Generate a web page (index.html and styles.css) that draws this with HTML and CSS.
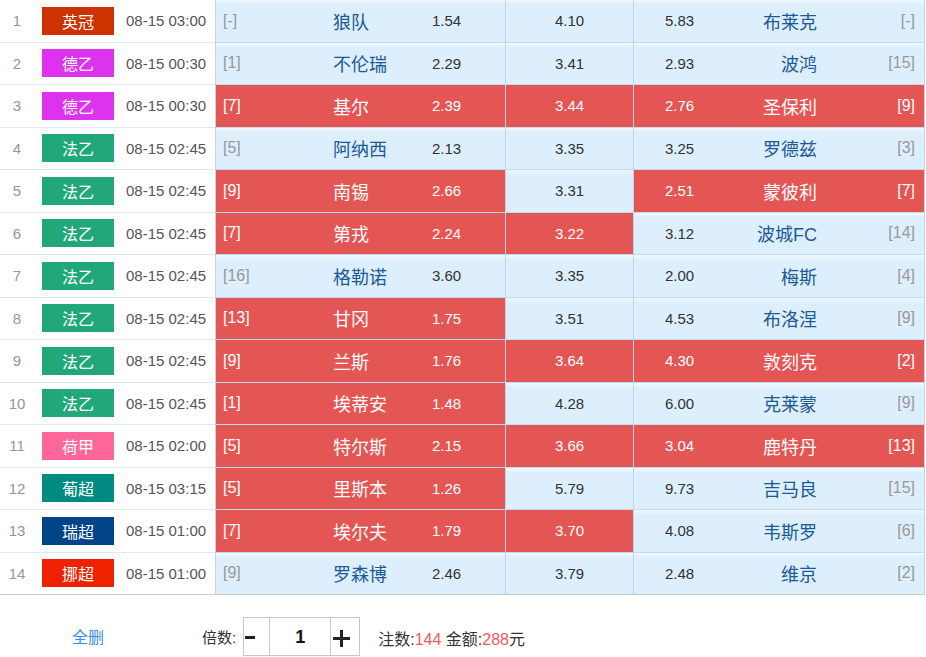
FILE: index.html
```html
<!DOCTYPE html>
<html lang="zh-CN">
<head>
<meta charset="utf-8">
<title>比赛列表</title>
<link rel="stylesheet" href="styles.css">
</head>
<body>
<div class="table">
  <div class="row">
    <div class="num">1</div><div class="league"><span class="badge b-yg">英冠</span></div><div class="time">08-15 03:00</div>
    <div class="home"><span class="rank">[-]</span><span class="team">狼队</span><span class="odds">1.54</span></div>
    <div class="draw">4.10</div>
    <div class="away"><span class="odds">5.83</span><span class="team">布莱克</span><span class="rank">[-]</span></div>
  </div>
  <div class="row">
    <div class="num">2</div><div class="league"><span class="badge b-dy">德乙</span></div><div class="time">08-15 00:30</div>
    <div class="home"><span class="rank">[1]</span><span class="team">不伦瑞</span><span class="odds">2.29</span></div>
    <div class="draw">3.41</div>
    <div class="away"><span class="odds">2.93</span><span class="team">波鸿</span><span class="rank">[15]</span></div>
  </div>
  <div class="row">
    <div class="num">3</div><div class="league"><span class="badge b-dy">德乙</span></div><div class="time">08-15 00:30</div>
    <div class="home hit"><span class="rank">[7]</span><span class="team">基尔</span><span class="odds">2.39</span></div>
    <div class="draw hit">3.44</div>
    <div class="away hit"><span class="odds">2.76</span><span class="team">圣保利</span><span class="rank">[9]</span></div>
  </div>
  <div class="row">
    <div class="num">4</div><div class="league"><span class="badge b-fy">法乙</span></div><div class="time">08-15 02:45</div>
    <div class="home"><span class="rank">[5]</span><span class="team">阿纳西</span><span class="odds">2.13</span></div>
    <div class="draw">3.35</div>
    <div class="away"><span class="odds">3.25</span><span class="team">罗德兹</span><span class="rank">[3]</span></div>
  </div>
  <div class="row">
    <div class="num">5</div><div class="league"><span class="badge b-fy">法乙</span></div><div class="time">08-15 02:45</div>
    <div class="home hit"><span class="rank">[9]</span><span class="team">南锡</span><span class="odds">2.66</span></div>
    <div class="draw">3.31</div>
    <div class="away hit"><span class="odds">2.51</span><span class="team">蒙彼利</span><span class="rank">[7]</span></div>
  </div>
  <div class="row">
    <div class="num">6</div><div class="league"><span class="badge b-fy">法乙</span></div><div class="time">08-15 02:45</div>
    <div class="home hit"><span class="rank">[7]</span><span class="team">第戎</span><span class="odds">2.24</span></div>
    <div class="draw hit">3.22</div>
    <div class="away"><span class="odds">3.12</span><span class="team">波城FC</span><span class="rank">[14]</span></div>
  </div>
  <div class="row">
    <div class="num">7</div><div class="league"><span class="badge b-fy">法乙</span></div><div class="time">08-15 02:45</div>
    <div class="home"><span class="rank">[16]</span><span class="team">格勒诺</span><span class="odds">3.60</span></div>
    <div class="draw">3.35</div>
    <div class="away"><span class="odds">2.00</span><span class="team">梅斯</span><span class="rank">[4]</span></div>
  </div>
  <div class="row">
    <div class="num">8</div><div class="league"><span class="badge b-fy">法乙</span></div><div class="time">08-15 02:45</div>
    <div class="home hit"><span class="rank">[13]</span><span class="team">甘冈</span><span class="odds">1.75</span></div>
    <div class="draw">3.51</div>
    <div class="away"><span class="odds">4.53</span><span class="team">布洛涅</span><span class="rank">[9]</span></div>
  </div>
  <div class="row">
    <div class="num">9</div><div class="league"><span class="badge b-fy">法乙</span></div><div class="time">08-15 02:45</div>
    <div class="home hit"><span class="rank">[9]</span><span class="team">兰斯</span><span class="odds">1.76</span></div>
    <div class="draw hit">3.64</div>
    <div class="away hit"><span class="odds">4.30</span><span class="team">敦刻克</span><span class="rank">[2]</span></div>
  </div>
  <div class="row">
    <div class="num">10</div><div class="league"><span class="badge b-fy">法乙</span></div><div class="time">08-15 02:45</div>
    <div class="home hit"><span class="rank">[1]</span><span class="team">埃蒂安</span><span class="odds">1.48</span></div>
    <div class="draw">4.28</div>
    <div class="away"><span class="odds">6.00</span><span class="team">克莱蒙</span><span class="rank">[9]</span></div>
  </div>
  <div class="row">
    <div class="num">11</div><div class="league"><span class="badge b-hj">荷甲</span></div><div class="time">08-15 02:00</div>
    <div class="home hit"><span class="rank">[5]</span><span class="team">特尔斯</span><span class="odds">2.15</span></div>
    <div class="draw hit">3.66</div>
    <div class="away hit"><span class="odds">3.04</span><span class="team">鹿特丹</span><span class="rank">[13]</span></div>
  </div>
  <div class="row">
    <div class="num">12</div><div class="league"><span class="badge b-pc">葡超</span></div><div class="time">08-15 03:15</div>
    <div class="home hit"><span class="rank">[5]</span><span class="team">里斯本</span><span class="odds">1.26</span></div>
    <div class="draw">5.79</div>
    <div class="away"><span class="odds">9.73</span><span class="team">吉马良</span><span class="rank">[15]</span></div>
  </div>
  <div class="row">
    <div class="num">13</div><div class="league"><span class="badge b-rc">瑞超</span></div><div class="time">08-15 01:00</div>
    <div class="home hit"><span class="rank">[7]</span><span class="team">埃尔夫</span><span class="odds">1.79</span></div>
    <div class="draw hit">3.70</div>
    <div class="away"><span class="odds">4.08</span><span class="team">韦斯罗</span><span class="rank">[6]</span></div>
  </div>
  <div class="row">
    <div class="num">14</div><div class="league"><span class="badge b-nc">挪超</span></div><div class="time">08-15 01:00</div>
    <div class="home"><span class="rank">[9]</span><span class="team">罗森博</span><span class="odds">2.46</span></div>
    <div class="draw">3.79</div>
    <div class="away"><span class="odds">2.48</span><span class="team">维京</span><span class="rank">[2]</span></div>
  </div>
</div>
<div class="footer">
  <a class="clear" href="#">全删</a>
  <span class="label">倍数:</span>
  <div class="stepper">
    <span class="step minus"><svg width="10" height="3" viewBox="0 0 10 3"><rect width="10" height="3" fill="#222"/></svg></span>
    <span class="value">1</span>
    <span class="step plus"><svg width="17" height="17" viewBox="0 0 17 17"><rect x="7" y="0" width="3" height="17" fill="#222"/><rect x="0" y="7" width="17" height="3" fill="#222"/></svg></span>
  </div>
  <span class="summary">注数:<em>144</em> 金额:<em>288</em>元</span>
</div>
</body>
</html>
```

FILE: styles.css
```css
html, body {
  margin: 0;
  padding: 0;
  background: #fff;
}
body {
  font-family: "Liberation Sans", "Noto Sans CJK SC", sans-serif;
  font-size: 15px;
  color: #333;
  width: 926px;
}
.table {
  width: 925px;
}
.row {
  display: grid;
  grid-template-columns: 34px 92px 89px 290px 128px 292px;
  height: 42.5px;
}
.row > div {
  box-sizing: border-box;
  display: flex;
  align-items: center;
  border-bottom: 1px solid #dfe9f5;
}
.num {
  justify-content: center;
  color: #9a948e;
  font-size: 15px;
}
.league {
  padding-left: 8px;
}
.badge {
  display: flex;
  align-items: center;
  justify-content: center;
  width: 72px;
  height: 28px;
  color: #fff;
  font-size: 16px;
}
.b-yg { background: #cc3300; }
.b-dy { background: #dd33ee; }
.b-fy { background: #21a779; }
.b-hj { background: #ff6699; }
.b-pc { background: #008a84; }
.b-rc { background: #004488; }
.b-nc { background: #ee2200; }
.time {
  color: #555;
  font-size: 15px;
  white-space: nowrap;
}
.row > .home,
.row > .draw,
.row > .away {
  background: linear-gradient(#f1f8fe, #ddeefc 5px);
  border-left: 1px solid #bcd5ef;
  border-bottom-color: #c4d9f0;
}
.row > .hit {
  background: #e45654;
  color: #fff;
}
.home {
  display: grid !important;
  grid-template-columns: 110px 99px 1fr;
  padding-left: 7px;
}
.away {
  display: grid !important;
  grid-template-columns: 55px 97px 98px;
  padding-left: 31px;
  padding-right: 9px;
  border-right: 1px solid #bcd5ef;
}
.draw {
  justify-content: center;
}
.rank {
  color: #999;
  font-size: 16px;
}
.team {
  color: #1b5a96;
  font-size: 18px;
}
.odds {
  color: #333;
}
.away .team,
.away .rank {
  text-align: right;
}
.hit .rank,
.hit .team,
.hit .odds {
  color: #fff;
}
.row:last-child > div {
  border-bottom-color: #c8c8c8;
}
.footer {
  display: flex;
  align-items: center;
  padding-top: 20px;
  padding-left: 72px;
  height: 42px;
}
.clear {
  width: 130px;
  color: #3a8ee6;
  text-decoration: none;
  font-size: 16px;
}
.label {
  color: #333;
}
.stepper {
  display: flex;
  box-sizing: border-box;
  margin-left: 7px;
  height: 39px;
  border: 1px solid #c8c8c8;
}
.step {
  display: flex;
  align-items: center;
}
.minus {
  width: 25px;
  padding-left: 1px;
  box-sizing: border-box;
  padding-top: 2px;
}
.plus {
  width: 28px;
  padding-left: 2px;
  box-sizing: border-box;
  padding-top: 4px;
}
.value {
  display: flex;
  align-items: center;
  justify-content: center;
  width: 62px;
  box-sizing: border-box;
  border-left: 1px solid #c8c8c8;
  border-right: 1px solid #c8c8c8;
  font-weight: bold;
  font-size: 18px;
  color: #111;
  padding-top: 3px;
}
.summary {
  margin-left: 18px;
  color: #333;
  font-size: 16px;
  padding-top: 3px;
}
.summary em {
  font-style: normal;
  color: #f55a5a;
}
```
